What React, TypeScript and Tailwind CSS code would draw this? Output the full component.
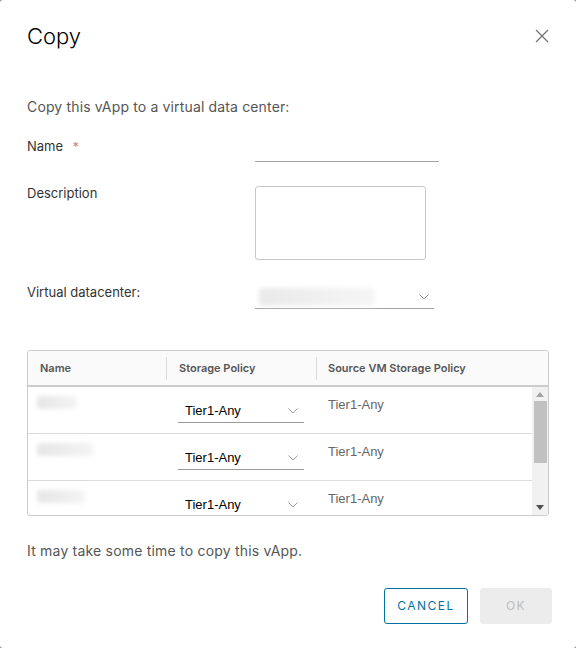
import React from "react";

const Chevron = ({ className = "" }: { className?: string }) => (
  <svg className={className} width="10" height="6" viewBox="0 0 10 6" fill="none">
    <path d="M0.5 0.5 L5 5 L9.5 0.5" stroke="#9a9a9a" strokeWidth="1" />
  </svg>
);

const Blur = ({ w }: { w: number }) => (
  <div className="h-[13px] rounded-sm bg-gradient-to-r from-[#e6e6e6] to-[#f4f4f4] blur-[2px]" style={{ width: w }} />
);

const rows = [
  { w: 40 },
  { w: 56 },
  { w: 48 },
];

export default function App() {
  return (
    <div className="w-[576px] h-[648px] bg-[#8c8c8c]" style={{ fontFamily: "Inter, 'Noto Sans', sans-serif" }}>
      <div className="w-[576px] h-[648px] bg-white rounded-[3px] flex flex-col px-[27px]">
        <div className="flex items-center justify-between pt-[22px] h-[50px]">
          <div className="text-[22px] text-[#000] font-light leading-[28px]">Copy</div>
          <svg width="16" height="16" viewBox="0 0 16 16" className="mr-[-1px]">
            <path d="M2 2 L14 14 M14 2 L2 14" stroke="#747474" strokeWidth="1.3" />
          </svg>
        </div>
        <div className="mt-[48px] text-[14px] text-[#565656] leading-[18px] tracking-[0.15px]">Copy this vApp to a virtual data center:</div>

        <div className="mt-[20px] flex">
          <div className="w-[228px] text-[13px] text-[#333] leading-[18px] pt-[1px]">
            Name <span className="text-[#e07a5f] ml-[6px] text-[12px]">*</span>
          </div>
          <div className="w-[184px] h-[26px] border-b border-[#a5a5a5]" />
        </div>

        <div className="mt-[24px] flex">
          <div className="w-[228px] text-[13px] text-[#333] leading-[18px] -mt-[2px]">Description</div>
          <div className="w-[171px] h-[74px] border border-[#c7c7c7] rounded-[3px]" />
        </div>

        <div className="mt-[24px] flex">
          <div className="w-[228px] text-[13px] text-[#333] leading-[18px] -mt-[1px]">Virtual datacenter:</div>
          <div className="w-[179px] h-[24px] mt-[1px] border-b border-[#a5a5a5] flex items-center justify-between pl-[4px] pr-[5px]">
            <div className="w-[116px] h-[18px] bg-gradient-to-r from-[#eaeaea] to-[#f6f6f6] blur-[2px] rounded-sm" />
            <Chevron />
          </div>
        </div>

        <div className="mt-[41px] w-[522px] h-[166px] border border-[#cccccc] rounded-[3px] flex flex-col overflow-hidden">
          <div className="h-[36px] bg-[#fafafa] border-b-2 border-[#cccccc] flex items-center text-[11px] font-semibold text-[#565656] shrink-0">
            <div className="w-[139px] pl-[12px] h-[23px] flex items-center border-r border-[#dcdcdc]">Name</div>
            <div className="w-[150px] pl-[12px] h-[23px] flex items-center border-r border-[#dcdcdc]">Storage Policy</div>
            <div className="pl-[11px] h-[23px] flex items-center">Source VM Storage Policy</div>
          </div>
          <div className="flex flex-1 min-h-0">
            <div className="flex-1 flex flex-col">
              {rows.map((r, i) => (
                <div key={i} className={`h-[47px] shrink-0 flex ${i < 2 ? "border-b border-[#dcdcdc]" : ""}`}>
                  <div className="w-[139px] pl-[9px] pt-[9px]">
                    <Blur w={r.w} />
                  </div>
                  <div className="w-[150px] pl-[11px] pt-[12px]">
                    <div className="w-[126px] h-[24px] border-b border-[#9a9a9a] flex items-end justify-between pl-[7px] pr-[6px] pb-[3px]">
                      <span className="text-[13px] text-[#000] leading-[16px]" style={{ fontFamily: "'Liberation Sans', Arial, sans-serif" }}>Tier1-Any</span>
                      <Chevron className="mb-[5px]" />
                    </div>
                  </div>
                  <div className="pl-[11px] pt-[10px] text-[13px] text-[#666] leading-[16px]" style={{ fontFamily: "'Liberation Sans', Arial, sans-serif" }}>Tier1-Any</div>
                </div>
              ))}
            </div>
            <div className="w-[16px] bg-[#f1f1f1] flex flex-col items-center">
              <svg width="8" height="5" viewBox="0 0 8 5" className="mt-[5px]"><path d="M0 5 L4 0 L8 5 Z" fill="#a3a3a3" /></svg>
              <div className="mt-[4px] w-[13px] h-[62px] bg-[#c1c1c1]" />
              <div className="flex-1" />
              <svg width="8" height="5" viewBox="0 0 8 5" className="mb-[5px]"><path d="M0 0 L4 5 L8 0 Z" fill="#505050" /></svg>
            </div>
          </div>
        </div>

        <div className="mt-[26px] text-[14px] text-[#565656] leading-[18px] tracking-[0.2px]">It may take some time to copy this vApp.</div>

        <div className="mt-[28px] flex justify-end gap-[12px] mr-[-3px]">
          <button className="w-[84px] h-[36px] border border-[#0072a3] rounded-[3px] text-[12px] tracking-[1.5px] text-[#0072a3] font-normal">CANCEL</button>
          <button className="w-[72px] h-[36px] bg-[#ececec] rounded-[3px] text-[12px] tracking-[1.5px] text-[#bdbdbd] font-normal">OK</button>
        </div>
      </div>
    </div>
  );
}
